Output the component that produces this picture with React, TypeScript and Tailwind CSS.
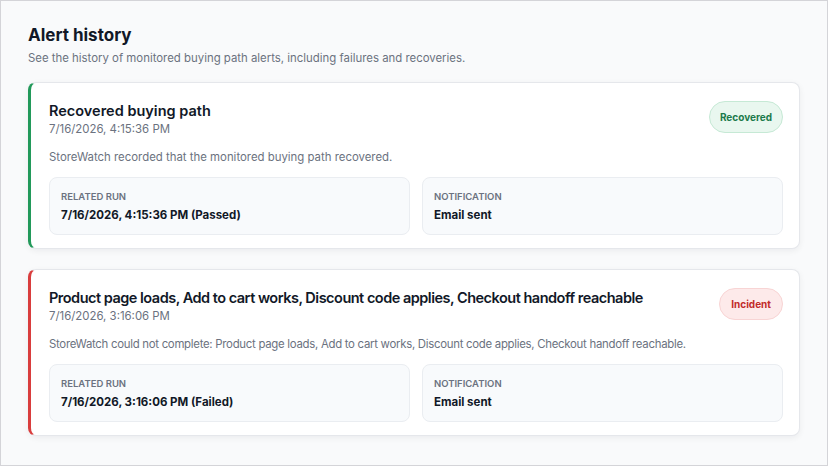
const alerts = [
  {
    id: "recovered",
    title: "Recovered buying path",
    time: "7/16/2026, 4:15:36 PM",
    message: "StoreWatch recorded that the monitored buying path recovered.",
    run: "7/16/2026, 4:15:36 PM (Passed)",
    notification: "Email sent",
    kind: "recovered" as const,
  },
  {
    id: "incident",
    title:
      "Product page loads, Add to cart works, Discount code applies, Checkout handoff reachable",
    time: "7/16/2026, 3:16:06 PM",
    message:
      "StoreWatch could not complete: Product page loads, Add to cart works, Discount code applies, Checkout handoff reachable.",
    run: "7/16/2026, 3:16:06 PM (Failed)",
    notification: "Email sent",
    kind: "incident" as const,
  },
];

function Badge({ kind }: { kind: "recovered" | "incident" }) {
  if (kind === "recovered") {
    return (
      <span className="shrink-0 h-8 px-[10px] flex items-center rounded-full border border-[#c6e9d5] bg-[#e9f7ef] text-[10px] font-bold text-[#1c7a4c]">
        Recovered
      </span>
    );
  }
  return (
    <span className="shrink-0 h-8 px-[11px] flex items-center rounded-full border border-[#f8d4d4] bg-[#fdeaea] text-[10px] font-bold text-[#c22a2a]">
      Incident
    </span>
  );
}

function InfoBox({ label, value }: { label: string; value: string }) {
  return (
    <div className="rounded-lg border border-[#eaedf1] bg-[#f8fafc] px-[11px] pt-3 pb-[10px]">
      <div className="text-[9.5px] leading-[14px] font-semibold uppercase text-[#6b7280]">
        {label}
      </div>
      <div className="mt-[3px] text-[11.5px] leading-[17px] font-bold text-[#111827]">
        {value}
      </div>
    </div>
  );
}

export default function App() {
  return (
    <div
      className="w-[828px] h-[466px] bg-[#f9fafb] border border-[#d4d4d8] px-[27px] pt-[22px] overflow-hidden"
      style={{ fontFamily: "Inter, 'Noto Sans', sans-serif" }}
    >
      <h1 className="text-[17px] leading-6 font-bold text-[#111827]">Alert history</h1>
      <p className="mt-[3px] text-[11.4px] leading-4 text-[#6b7280]">
        See the history of monitored buying path alerts, including failures and recoveries.
      </p>

      <div className="mt-4 flex flex-col gap-5">
        {alerts.map((a) => {
          const long = a.kind === "incident";
          return (
            <div
              key={a.id}
              className={`rounded-lg border border-[#e5e7eb] border-l-[3px] bg-white shadow-[0_2px_6px_rgba(15,23,42,0.06)] pl-[18px] pr-4 pt-[18px] pb-[13px] ${
                long ? "border-l-[#d93d3d]" : "border-l-[#22995a]"
              }`}
            >
              <div className="flex items-start justify-between gap-4">
                <div className="min-w-0">
                  <div
                    className={`text-[14.5px] leading-5 font-semibold text-[#111827] ${
                      long ? "tracking-[-0.5px]" : ""
                    }`}
                  >
                    {a.title}
                  </div>
                  <div className="text-[11.4px] leading-4 text-[#6b7280]">{a.time}</div>
                </div>
                <Badge kind={a.kind} />
              </div>
              <p
                className={`mt-3 text-[11.4px] leading-4 text-[#6b7280] ${
                  long ? "tracking-[-0.28px]" : ""
                }`}
              >
                {a.message}
              </p>
              <div className="mt-3 grid grid-cols-2 gap-3">
                <InfoBox label="Related run" value={a.run} />
                <InfoBox label="Notification" value={a.notification} />
              </div>
            </div>
          );
        })}
      </div>
    </div>
  );
}
